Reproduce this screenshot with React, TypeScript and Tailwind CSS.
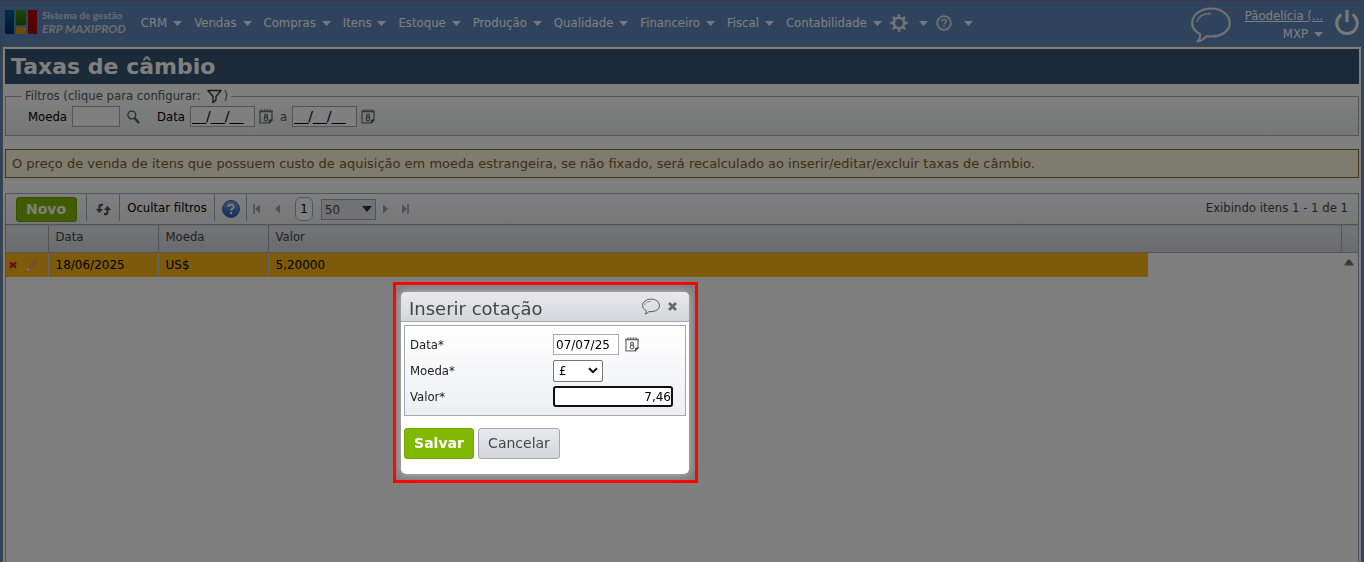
import type { ReactNode } from "react";

const menus = ["CRM", "Vendas", "Compras", "Itens", "Estoque", "Produção", "Qualidade", "Financeiro", "Fiscal", "Contabilidade"];

function Caret() {
  return (
    <svg width="9" height="5" viewBox="0 0 9 5" className="shrink-0" aria-hidden="true">
      <path d="M0 0h9L4.5 5z" fill="#f0f0f0" />
    </svg>
  );
}

function CalendarIcon() {
  return (
    <svg width="14" height="15" viewBox="0 0 14 15" fill="none" aria-hidden="true">
      <path d="M1 2v11.800h8.500L13 10.500V2" stroke="#777" strokeWidth="1.300" />
      <path d="M0.500 1.500h13v1.800h-13z" fill="#666" />
      <path d="M3 0v3M5.700 0v3M8.300 0v3M11 0v3" stroke="#777" />
      <path d="M13.500 10v1.500l-3.500 3.500v-4z" fill="#555" />
      <circle cx="7" cy="6.800" r="1.500" stroke="#666" strokeWidth="1.200" />
      <circle cx="7" cy="10.100" r="1.800" stroke="#666" strokeWidth="1.200" />
    </svg>
  );
}

function Bubble({ width, height, stroke, weight }: { width: number; height: number; stroke: string; weight: number }) {
  return (
    <svg width={width} height={height} viewBox="0 0 40 36" fill="none" stroke={stroke} strokeWidth={weight} aria-hidden="true">
      <path d="M9 27C4 24.500 1.200 20.500 1.200 16C1.200 8 9.500 1.500 20 1.500S38.800 8 38.800 16S30.500 29.500 20 29.500C18.500 29.500 17 29.400 15.500 29.200C13 32 10 34 6.500 34.500C9 32 9.500 30 9 27Z" strokeLinejoin="round" />
      <path d="M6 15C7 10 12 6.500 20 6.500" strokeWidth={weight * 0.6} />
    </svg>
  );
}

function PagerArrow({ back, end, label }: { back?: boolean; end?: boolean; label: string }) {
  return (
    <button type="button" aria-label={label} className="flex w-2 justify-center">
      <svg width="8" height="10" viewBox="0 0 8 10" className={back ? "rotate-180" : ""} aria-hidden="true">
        <path d="M1 0.500v9L6 5z" fill="#9a9ea6" />
        {end && <path d="M7 0v10" stroke="#9a9ea6" strokeWidth="1.600" />}
      </svg>
    </button>
  );
}

function ToolCell({ children, className }: { children: ReactNode; className: string }) {
  return <div className={"flex h-[27px] items-center justify-center self-start border-r border-[#a2a8b4] " + className}>{children}</div>;
}

function Header() {
  return (
    <header className="flex h-[46px] items-start border-t border-[#8a6a94]">
      <a href="#inicio" className="flex items-center gap-[5px] pt-2 pl-[5px]">
        <svg width="32" height="26" viewBox="0 0 32 26" aria-label="Maxiprod">
          <defs>
            <linearGradient id="lb" x2="0" y2="1"><stop stopColor="#00589e" /><stop offset="1" stopColor="#002f60" /></linearGradient>
            <linearGradient id="lg" x2="0" y2="1"><stop stopColor="#3c9a08" /><stop offset="1" stopColor="#1d6400" /></linearGradient>
            <linearGradient id="lr" x2="0" y2="1"><stop stopColor="#be0808" /><stop offset="1" stopColor="#9c0000" /></linearGradient>
          </defs>
          <rect x="0" y="1" width="9" height="24" rx="1" fill="url(#lb)" />
          <rect x="11" y="1" width="10" height="15" rx="1" fill="url(#lg)" />
          <rect x="11" y="18" width="10" height="7" rx="1" fill="#d69a10" />
          <rect x="23" y="1" width="9" height="24" rx="1" fill="url(#lr)" />
        </svg>
        <span className="flex flex-col font-['Lato',sans-serif] font-bold text-[#d5d9de]">
          <span className="text-[10px] leading-[13px]">Sistema de gestão</span>
          <span className="text-[12px] leading-[13px] italic">ERP MAXIPROD</span>
        </span>
      </a>
      <nav className="flex items-center gap-3 pt-3 pl-[15px] text-[13px] leading-5 text-white">
        {menus.map((m) => (
          <a key={m} href="#menu" className="flex items-center gap-[6px]">
            {m}
            <Caret />
          </a>
        ))}
        <button type="button" aria-label="Configurações" className="-ml-1 flex items-center gap-[11px]">
          <svg width="18" height="18" viewBox="0 0 18 18" fill="none" stroke="#e8e8e8" aria-hidden="true">
            <circle cx="9" cy="9" r="5.200" strokeWidth="2.600" />
            <path d="M9 0.300v3M9 14.700v3M0.300 9h3M14.700 9h3M2.900 2.900l2 2M13.100 13.100l2 2M2.900 15.100l2-2M13.100 4.900l2-2" strokeWidth="2.600" />
          </svg>
          <Caret />
        </button>
        <button type="button" aria-label="Ajuda" className="-ml-1 flex items-center gap-3">
          <svg width="16" height="16" viewBox="0 0 16 16" fill="none" stroke="#e0e0e0" aria-hidden="true">
            <circle cx="8" cy="8" r="6.800" strokeWidth="1.800" />
            <path d="M5.800 6.500C5.800 3.600 10.400 3.700 10.300 6.300C10.200 7.900 8 7.800 8 9.700M8 10.800v1.500" strokeWidth="1.400" />
          </svg>
          <Caret />
        </button>
      </nav>
      <div className="ml-auto flex pt-[6px] pr-[5px]">
        <button type="button" aria-label="Chat" className="mr-[14px]">
          <Bubble width={40} height={36} stroke="#e4e4e4" weight={2.2} />
        </button>
        <div className="mr-3 flex flex-col items-end text-[13px] leading-[18px] text-white">
          <a href="#empresa" className="underline">Pãodelícia (...</a>
          <a href="#usuario" className="flex items-center gap-[6px]">MXP <Caret /></a>
        </div>
        <button type="button" aria-label="Sair" className="mt-[2px] h-6">
          <svg width="24" height="26" viewBox="0 0 24 26" fill="none" stroke="#f0f0f0" aria-hidden="true">
            <path d="M6.500 5.500A10.300 10.300 0 1 0 17.500 5.500" strokeWidth="3" />
            <path d="M12 1v12" strokeWidth="3.400" />
          </svg>
        </button>
      </div>
    </header>
  );
}

function Filters() {
  return (
    <fieldset className="mt-[5px] flex h-[47px] items-start border border-[#a8acb0] bg-linear-to-b from-white to-[#eaecec] pl-[22px] text-[13px]">
      <legend className="ml-[-6px] flex h-[14px] items-center gap-[6px] px-[3px] leading-4 text-[#555]">
        Filtros (clique para configurar:
        <span className="flex items-center gap-[2px]">
          <button type="button" aria-label="Configurar filtros">
            <svg width="15" height="15" viewBox="0 0 15 15" fill="none" stroke="#333" strokeWidth="1.400" strokeLinejoin="round" aria-hidden="true">
              <path d="M1 1.500h13L9 7.500v3.500L6 13.500v-6z" />
            </svg>
          </button>
          )
        </span>
      </legend>
      <div className="flex h-[27px] items-center">
        <label htmlFor="moeda-filtro" className="mr-[5px] text-black">Moeda</label>
        <input id="moeda-filtro" className="h-[21px] w-12 border border-[#aaa] bg-white" />
        <button type="button" aria-label="Pesquisar" className="ml-[7px]">
          <svg width="13" height="14" viewBox="0 0 13 14" fill="none" stroke="#555" aria-hidden="true">
            <circle cx="4.800" cy="5" r="3.900" strokeWidth="1.300" />
            <path d="M7.500 8l4.500 5" strokeWidth="2.200" />
          </svg>
        </button>
        <label htmlFor="data-inicio" className="mr-[5px] ml-[17px] text-black">Data</label>
        <input id="data-inicio" defaultValue="__/__/__" className="h-[21px] w-[65px] border border-[#aaa] bg-white px-[1px] font-['DejaVu_Sans',sans-serif] text-[14px] text-black" />
        <button type="button" aria-label="Escolher data inicial" className="ml-1"><CalendarIcon /></button>
        <label htmlFor="data-fim" className="mr-[5px] ml-[7px] text-[#555]">a</label>
        <input id="data-fim" defaultValue="__/__/__" className="h-[21px] w-[65px] border border-[#aaa] bg-white px-[1px] font-['DejaVu_Sans',sans-serif] text-[14px] text-black" />
        <button type="button" aria-label="Escolher data final" className="ml-1"><CalendarIcon /></button>
      </div>
    </fieldset>
  );
}

function Toolbar() {
  return (
    <div className="flex h-[30px] items-center bg-linear-to-b from-white to-[#eeeff0] text-[13px]">
      <ToolCell className="w-[81px] pt-[3px]">
        <button type="button" className="h-[25px] w-[61px] rounded-[3px] border border-[#6fa300] bg-[#80b900] font-['DejaVu_Sans',sans-serif] text-[14px] leading-5 font-bold text-white">Novo</button>
      </ToolCell>
      <ToolCell className="w-[33px] pt-[3px]">
        <button type="button" aria-label="Atualizar">
          <svg width="17" height="13" viewBox="0 0 17 13" fill="none" stroke="#555" strokeWidth="2.200" aria-hidden="true">
            <path d="M8 1.800H6.500Q4.500 1.800 4.500 4V7M9 11.200h1.500Q12.500 11.200 12.500 9V5" />
            <path d="M0.800 6h7.400L4.500 10zM8.800 7h7.400L12.500 3z" fill="#555" stroke="none" />
          </svg>
        </button>
      </ToolCell>
      <ToolCell className="w-[95px]"><button type="button" className="text-black">Ocultar filtros</button></ToolCell>
      <ToolCell className="w-8 pt-[3px]">
        <button type="button" aria-label="Ajuda da tela">
          <svg width="18" height="18" viewBox="0 0 18 18" fill="none" aria-hidden="true">
            <defs><linearGradient id="hb" x2="0" y2="1"><stop stopColor="#7aa4dc" /><stop offset="1" stopColor="#2458b4" /></linearGradient></defs>
            <circle cx="9" cy="9" r="8.500" fill="url(#hb)" stroke="#3a68b0" />
            <path d="M6.200 7C6.200 3.600 12 3.800 11.700 7C11.500 8.700 9 8.700 9 10.800M9 12v2.200" stroke="#f4f4f4" strokeWidth="2" />
          </svg>
        </button>
      </ToolCell>
      <div className="flex items-center pl-[6px]">
        <PagerArrow back end label="Primeira página" />
        <span className="w-[12px]" />
        <PagerArrow back label="Página anterior" />
        <button type="button" className="ml-[14px] h-6 w-[18px] rounded-[6px] border border-[#a2a8b4] bg-white text-black">1</button>
        <span className="relative ml-2 flex items-center">
          <select aria-label="Itens por página" className="h-[21px] w-[55px] appearance-none border border-[#a2a8b4] bg-[#e2e4e8] pl-[3px] text-[#444]"><option>50</option></select>
          <svg width="10" height="6" viewBox="0 0 10 6" className="pointer-events-none absolute right-1" aria-hidden="true"><path d="M0 0h10L5 6z" fill="#333" /></svg>
        </span>
        <span className="w-[6px]" />
        <PagerArrow label="Próxima página" />
        <span className="w-[11px]" />
        <PagerArrow end label="Última página" />
      </div>
      <span className="ml-auto self-start pr-[10px] leading-[27px] text-[#444]">Exibindo itens 1 - 1 de 1</span>
    </div>
  );
}

function RatesTable() {
  return (
    <table className="w-full table-fixed border-collapse text-left text-[13px]">
      <colgroup>
        <col className="w-[42px]" /><col className="w-[110px]" /><col className="w-[110px]" /><col className="w-[880px]" /><col /><col className="w-[17px]" />
      </colgroup>
      <thead>
        <tr className="h-7 border-y border-[#a2a8b4] bg-linear-to-b from-[#e8eaec] to-[#d3d6db] text-[#444]">
          <th aria-label="Ações" />
          <th className="border-l border-[#a2a8b4] px-[7px] pb-[3px] font-normal">Data</th>
          <th className="border-l border-[#a2a8b4] px-[7px] pb-[3px] font-normal">Moeda</th>
          <th colSpan={2} className="border-l border-[#a2a8b4] px-[7px] pb-[3px] font-normal">Valor</th>
          <th aria-label="Rolagem" className="border-l border-[#a2a8b4]" />
        </tr>
      </thead>
      <tbody>
        <tr className="h-6 font-['DejaVu_Sans',sans-serif] text-[12px] text-black">
          <td className="bg-[#fcb716]">
            <span className="flex items-center gap-[8px] pl-[3px]">
              <button type="button" aria-label="Excluir">
                <svg width="8" height="8" viewBox="0 0 8 8" aria-hidden="true"><path d="M1 1.500l6 5M7 1.500L1 6.500" stroke="#c8281c" strokeWidth="2.400" /></svg>
              </button>
              <button type="button" aria-label="Editar">
                <svg width="14" height="14" viewBox="0 0 14 14" aria-hidden="true">
                  <path d="M2 9.500L10.500 1Q13 0.500 13.500 3L5 12z" fill="#f09a50" />
                  <path d="M0 14l2-4.500L5 12z" fill="#f2d8b8" />
                  <path d="M0 14l0.800-1.800 1 1z" fill="#555" />
                </svg>
              </button>
            </span>
          </td>
          <td className="border-l border-[#c8ccd4] bg-[#fcb716] px-[7px]">18/06/2025</td>
          <td className="border-l border-[#c8ccd4] bg-[#fcb716] px-[7px]">US$</td>
          <td className="border-l border-[#c8ccd4] bg-[#fcb716] px-[7px]">5,20000</td>
          <td />
          <td className="pl-[3px] align-middle">
            <svg width="10" height="7" viewBox="0 0 10 7" className="mb-[5px]" aria-hidden="true"><path d="M0 6.500L4 0.500h2l4 6z" fill="#777" /></svg>
          </td>
        </tr>
      </tbody>
    </table>
  );
}

function RateDialog() {
  return (
    <div className="fixed top-[282px] left-[393px] border-3 border-[#ff0000] pt-[7px] pr-[6px] pb-[6px] pl-[5px]">
      <form role="dialog" aria-label="Inserir cotação" className="h-[182px] w-72 rounded-[5px] bg-white px-[3px] text-[13px] text-[#222] shadow-[0_0_8px_rgba(255,255,255,0.5)]">
        <div className="-mx-[3px] flex h-[30px] items-center rounded-t-[5px] border-b border-[#a2a8b4] bg-linear-to-b from-[#e8eaec] to-[#d3d6db] pr-3 pl-2">
          <h2 className="pt-[5px] font-['DejaVu_Sans',sans-serif] text-[18px] leading-6 text-[#444]">Inserir cotação</h2>
          <button type="button" aria-label="Comentar" className="ml-auto"><Bubble width={18} height={17} stroke="#555" weight={2.2} /></button>
          <button type="button" aria-label="Fechar" className="ml-2">
            <svg width="9" height="9" viewBox="0 0 9 9" aria-hidden="true"><path d="M1 1l7 7M8 1L1 8" stroke="#666" strokeWidth="2.600" /></svg>
          </button>
        </div>
        <div className="mt-[3px] grid h-[91px] grid-cols-[143px_1fr] grid-rows-[25px_27px_25px] items-center border border-[#a2a8b4] bg-linear-to-b from-white to-[#eeeff1] pt-[6px] pl-[5px]">
          <label htmlFor="data">Data*</label>
          <span className="flex items-center gap-[6px]">
            <input id="data" defaultValue="07/07/25" className="h-[21px] w-[66px] border border-[#aaa] bg-white px-[2px] font-['DejaVu_Sans',sans-serif] text-[12px] text-black" />
            <button type="button" aria-label="Escolher data"><CalendarIcon /></button>
          </span>
          <label htmlFor="moeda">Moeda*</label>
          <span className="relative flex w-[50px] items-center">
            <select id="moeda" className="h-[22px] w-[50px] appearance-none rounded-[2px] border border-[#767676] bg-white pl-[5px] text-black"><option>£</option></select>
            <svg width="10" height="7" viewBox="0 0 10 7" fill="none" className="pointer-events-none absolute right-[5px]" aria-hidden="true"><path d="M1 1.200l4 4 4-4" stroke="#111" strokeWidth="2" /></svg>
          </span>
          <label htmlFor="valor">Valor*</label>
          <input id="valor" defaultValue="7,46" className="h-[21px] w-[120px] rounded-[3px] border-2 border-[#101010] bg-white text-right font-['DejaVu_Sans',sans-serif] text-[12px] text-black" />
        </div>
        <div className="mt-3 flex gap-1 font-['DejaVu_Sans',sans-serif] text-[14px]">
          <button type="submit" className="h-[31px] w-[70px] rounded-[3px] border border-[#73a800] bg-[#80b900] font-bold text-white">Salvar</button>
          <button type="button" className="h-[31px] w-[82px] rounded-[3px] border border-[#a2a8b4] bg-linear-to-b from-[#e8eaec] to-[#d3d6db] text-[#444]">Cancelar</button>
        </div>
      </form>
    </div>
  );
}

export default function App() {
  return (
    <div className="flex min-h-screen flex-col bg-[#5e86b8] font-['DejaVu_Sans_Condensed','DejaVu_Sans',sans-serif]">
      <Header />
      <main className="mx-[2px] flex grow flex-col border border-b-0 border-[#8a8a8a] bg-white px-[2px] pt-[2px]">
        <h1 className="h-[35px] bg-[#365470] pl-[6px] font-['DejaVu_Sans',sans-serif] text-[22px] leading-[35px] font-bold text-white">Taxas de câmbio</h1>
        <Filters />
        <p className="mt-[13px] border border-[#8c6a3c] bg-[#fdf8df] px-[6px] font-['DejaVu_Sans',sans-serif] text-[13px] leading-[27px] text-[#82592c]">
          O preço de venda de itens que possuem custo de aquisição em moeda estrangeira, se não fixado, será recalculado ao inserir/editar/excluir taxas de câmbio.
        </p>
        <section className="mt-[15px] grow border border-b-0 border-[#a2a8b4]">
          <Toolbar />
          <RatesTable />
        </section>
      </main>
      <div className="fixed inset-0 bg-black/50" />
      <RateDialog />
    </div>
  );
}
